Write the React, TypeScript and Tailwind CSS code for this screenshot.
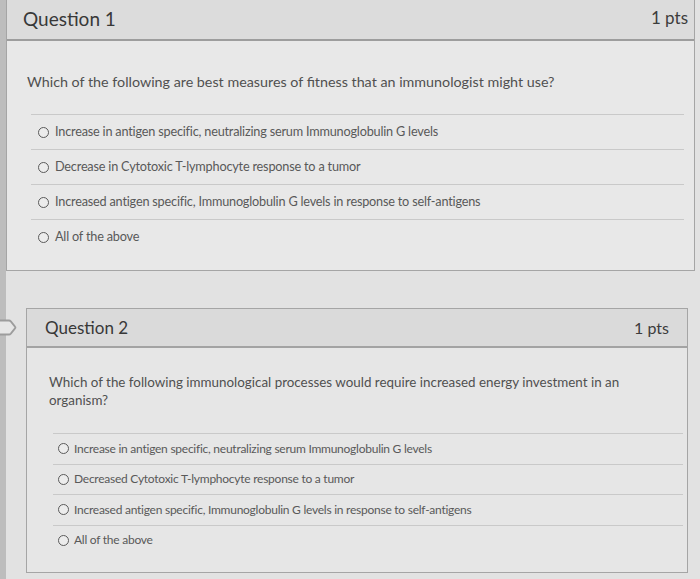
import React from 'react';

type QuizQuestion = {
  title: string;
  points: string;
  text: string;
  answers: string[];
};

const q1: QuizQuestion = {
  title: 'Question 1',
  points: '1 pts',
  text: 'Which of the following are best measures of fitness that an immunologist might use?',
  answers: [
    'Increase in antigen specific, neutralizing serum Immunoglobulin G levels',
    'Decrease in Cytotoxic T-lymphocyte response to a tumor',
    'Increased antigen specific, Immunoglobulin G levels in response to self-antigens',
    'All of the above',
  ],
};

const q2: QuizQuestion = {
  title: 'Question 2',
  points: '1 pts',
  text: 'Which of the following immunological processes would require increased energy investment in an organism?',
  answers: [
    'Increase in antigen specific, neutralizing serum Immunoglobulin G levels',
    'Decreased Cytotoxic T-lymphocyte response to a tumor',
    'Increased antigen specific, Immunoglobulin G levels in response to self-antigens',
    'All of the above',
  ],
};

function Radio() {
  return (
    <span className="inline-block h-[11px] w-[11px] shrink-0 rounded-full border-[1.5px] border-[#5a5a5a] bg-[#ececec]" />
  );
}

function Bookmark() {
  return (
    <svg width="18" height="20" viewBox="0 0 18 20" className="absolute left-0 top-[318px]">
      <path
        d="M-3 2.5 H9 Q10 2.5 10.8 3.4 L15 8.6 Q15.8 9.5 15 10.4 L10.8 15.6 Q10 16.5 9 16.5 H-3"
        fill="#e6e6e6"
        stroke="#9c9c9c"
        strokeWidth="1.8"
        strokeLinejoin="round"
      />
    </svg>
  );
}

export default function App() {
  return (
    <div
      className="relative flex h-[579px] w-[700px] overflow-hidden bg-[#e2e2e2]"
      style={{ fontFamily: 'Lato, "Open Sans", sans-serif' }}
    >
      <div className="w-[6px] shrink-0 bg-[#bdbdbd]" />
      <Bookmark />

      <div className="flex min-w-0 flex-1 flex-col">
        {/* Question 1 */}
        <div className="mr-[5px] border-x border-b border-[#a5a5a5]">
          <div className="flex h-[41px] items-center justify-between border-b-2 border-[#9d9d9d] bg-[#dcdcdc] pl-[16px] pr-[6px]">
            <span className="text-[19px] text-[#383838]">{q1.title}</span>
            <span className="-mt-[4px] text-[17px] text-[#3c3c3c]">{q1.points}</span>
          </div>
          <div className="bg-[#e8e8e8] pb-[16px] pl-[20px] pr-[10px] pt-[31px]">
            <p className="text-[14.3px] leading-[20px] text-[#505050]">{q1.text}</p>
            <div className="mt-[22px] pl-[4px]">
              {q1.answers.map((a) => (
                <div key={a} className="flex h-[35px] items-center gap-[6px] border-t border-[#c9c9c9] pl-[7px]">
                  <Radio />
                  <span className="text-[12.7px] tracking-[-0.2px] text-[#595959]">{a}</span>
                </div>
              ))}
            </div>
          </div>
        </div>

        {/* Question 2 */}
        <div className="ml-[20px] mr-[12px] mt-[37px] border border-[#a5a5a5]">
          <div className="flex h-[39px] items-center justify-between border-b-2 border-[#a3a3a3] bg-[#dadada] px-[18px]">
            <span className="text-[17px] text-[#383838]">{q2.title}</span>
            <span className="text-[16px] text-[#3c3c3c]">{q2.points}</span>
          </div>
          <div className="bg-[#e6e6e6] pb-[17px] pl-[22px] pr-[4px] pt-[25px]">
            <p className="max-w-[580px] text-[13.4px] leading-[18px] text-[#505050]">{q2.text}</p>
            <div className="mt-[24px] pl-[4px]">
              {q2.answers.map((a) => (
                <div key={a} className="flex h-[30.5px] items-center gap-[5px] border-t border-[#c9c9c9] pl-[5px]">
                  <Radio />
                  <span className="text-[12px] tracking-[-0.25px] text-[#595959]">{a}</span>
                </div>
              ))}
            </div>
          </div>
        </div>
      </div>
    </div>
  );
}
